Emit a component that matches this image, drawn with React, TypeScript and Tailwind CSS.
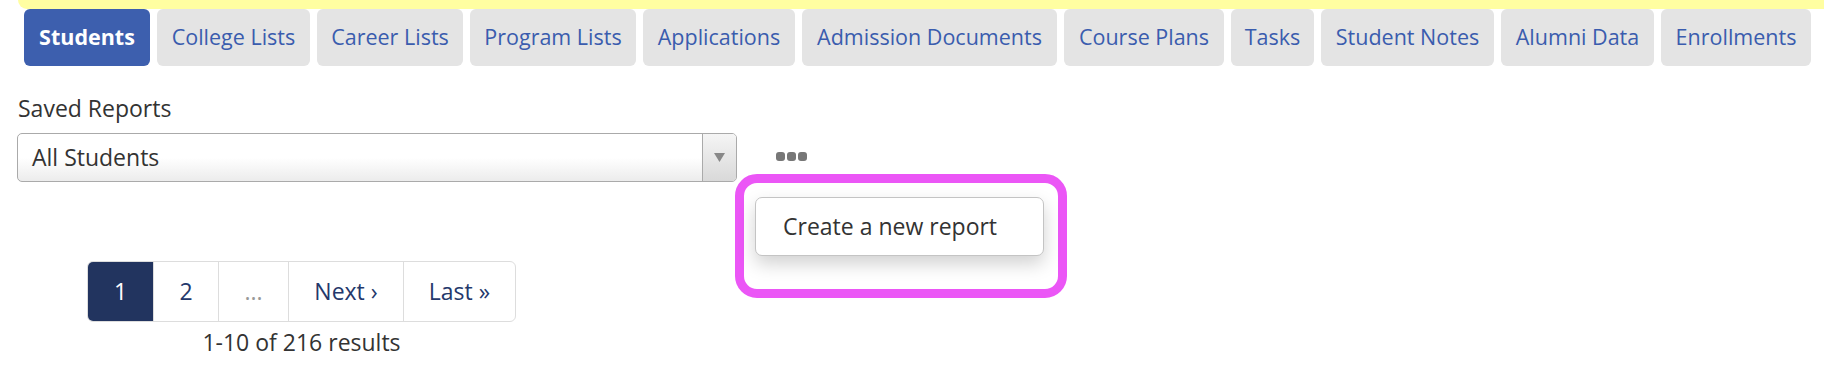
import React from "react";

const tabs: [string, number][] = [
  ["Students", 126],
  ["College Lists", 153],
  ["Career Lists", 146],
  ["Program Lists", 166],
  ["Applications", 152],
  ["Admission Documents", 255],
  ["Course Plans", 160],
  ["Tasks", 83],
  ["Student Notes", 173],
  ["Alumni Data", 153],
  ["Enrollments", 150],
];

function Tabs() {
  return (
    <div className="flex gap-[7px] pl-[24px]">
      {tabs.map(([t, w], i) => (
        <div
          key={t}
          style={{ width: w }}
          className={`h-[57px] flex items-center justify-center rounded-[6px] text-[21.5px] whitespace-nowrap ${
            i === 0 ? "bg-[#3d5fae] text-white font-bold" : "bg-[#e4e4e4] text-[#3a5cae]"
          }`}
        >
          {t}
        </div>
      ))}
    </div>
  );
}

function SavedReports() {
  return (
    <div className="pl-[17px] pt-[26px]">
      <div className="text-[23px] leading-[32px] text-[#333] pl-px">Saved Reports</div>
      <div className="flex items-center mt-[9px]">
        <div className="w-[720px] h-[49px] flex border border-[#aaa] rounded-[5px] bg-gradient-to-b from-white from-50% to-[#ececec] overflow-hidden">
          <div className="flex-1 flex items-center pl-[14px] text-[23px] text-[#333]">All Students</div>
          <div className="w-[34px] border-l border-[#aaa] flex items-center justify-center bg-gradient-to-b from-[#f5f5f5] to-[#d9d9d9]">
            <svg width="11" height="9" viewBox="0 0 11 9">
              <path d="M0 0 L11 0 L5.5 9 Z" fill="#888" />
            </svg>
          </div>
        </div>
        <div className="relative ml-[39px] -mt-[2px]">
          <div className="flex gap-[2px]">
            <span className="w-[9px] h-[9px] rounded-[3px] bg-[#777]" />
            <span className="w-[9px] h-[9px] rounded-[3px] bg-[#777]" />
            <span className="w-[9px] h-[9px] rounded-[3px] bg-[#777]" />
          </div>
          <div className="absolute left-[-41px] top-[22px] w-[332px] h-[124px] border-[9px] border-[#eb56f6] rounded-[22px] bg-white pl-[11px] pt-[14px]">
            <div className="w-[289px] h-[59px] border border-[#c4c4c4] rounded-[7px] bg-white shadow-[0_8px_18px_rgba(0,0,0,0.18)] flex items-center pl-[27px] text-[23px] text-[#333] whitespace-nowrap">
              Create a new report
            </div>
          </div>
        </div>
      </div>
    </div>
  );
}

function Pagination() {
  const cell = "h-full flex items-center justify-center border-l border-[#ddd]";
  return (
    <div className="ml-[87px] mt-[79px] w-[429px]">
      <div className="h-[61px] flex border border-[#ddd] rounded-[6px] overflow-hidden text-[23px] text-[#24386b]">
        <div className="w-[65px] h-full flex items-center justify-center bg-[#22345f] text-white">1</div>
        <div className={`w-[65px] ${cell}`}>2</div>
        <div className={`w-[70px] ${cell} text-[#999]`}>...</div>
        <div className={`w-[115px] ${cell}`}>Next ›</div>
        <div className={`flex-1 ${cell}`}>Last »</div>
      </div>
      <div className="mt-[4px] text-center text-[23px] leading-[32px] text-[#333]">1-10 of 216 results</div>
    </div>
  );
}

export default function App() {
  return (
    <div className="w-[1824px] h-[370px] bg-white overflow-hidden font-['Open_Sans',sans-serif]">
      <div className="ml-[18px] h-[9px] bg-[#fffea1] rounded-bl-[10px]" />
      <Tabs />
      <SavedReports />
      <Pagination />
    </div>
  );
}
